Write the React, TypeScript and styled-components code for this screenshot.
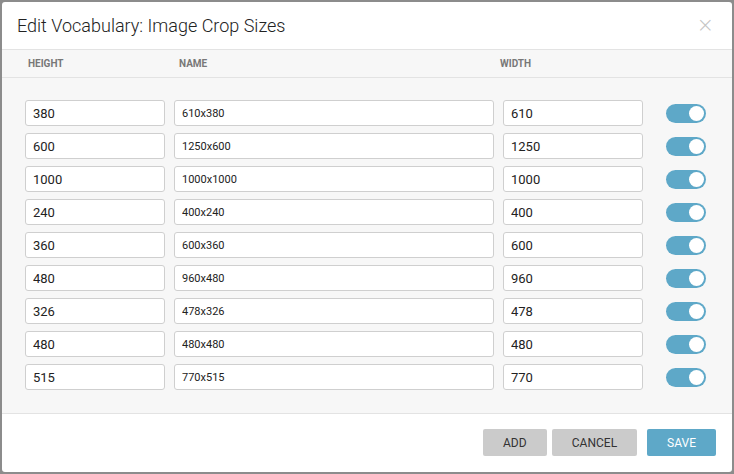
import React from "react";
import styled, { createGlobalStyle } from "styled-components";

const rows = [
  { height: "380", name: "610x380", width: "610" },
  { height: "600", name: "1250x600", width: "1250" },
  { height: "1000", name: "1000x1000", width: "1000" },
  { height: "240", name: "400x240", width: "400" },
  { height: "360", name: "600x360", width: "600" },
  { height: "480", name: "960x480", width: "960" },
  { height: "326", name: "478x326", width: "478" },
  { height: "480", name: "480x480", width: "480" },
  { height: "515", name: "770x515", width: "770" },
];

const App = () => {
  return (
    <>
      <GlobalStyle />
      <Backdrop>
        <Modal>
          <Header>
            <Title>Edit Vocabulary: Image Crop Sizes</Title>
            <Close>×</Close>
          </Header>
          <ColumnHeader>
            <Label>Height</Label>
            <Label>Name</Label>
            <Label>Width</Label>
          </ColumnHeader>
          <Body>
            {rows.map((r, i) => (
              <Row key={i}>
                <Field defaultValue={r.height} />
                <Field defaultValue={r.name} small />
                <Field defaultValue={r.width} />
                <Toggle>
                  <Knob />
                </Toggle>
              </Row>
            ))}
          </Body>
          <Footer>
            <Button>Add</Button>
            <Button>Cancel</Button>
            <Button primary>Save</Button>
          </Footer>
        </Modal>
      </Backdrop>
    </>
  );
};

export default App;

const GlobalStyle = createGlobalStyle`
  html, body {
    margin: 0;
    padding: 0;
    background: #8c8c8c;
    font-family: Roboto, "Liberation Sans", sans-serif;
  }
`;

const Backdrop = styled.div`
  width: 734px;
  height: 474px;
  padding: 2px;
  box-sizing: border-box;
  background: #8c8c8c;
`;

const Modal = styled.div`
  width: 730px;
  height: 470px;
  background: #fff;
  border-radius: 3px;
  overflow: hidden;
  display: flex;
  flex-direction: column;
`;

const Header = styled.div`
  height: 47px;
  display: flex;
  align-items: center;
  justify-content: space-between;
  padding: 0 18px 0 15px;
  border-bottom: 1px solid #e3e3e3;
  flex-shrink: 0;
`;

const Title = styled.div`
  font-size: 18px;
  font-weight: 300;
  color: #222;
  margin-top: 0;
`;

const Close = styled.div`
  font-size: 21px;
  color: #c4c4c4;
  font-family: "DejaVu Sans", sans-serif;
  font-weight: 300;
  margin-top: -2px;
`;

const ColumnHeader = styled.div`
  height: 27px;
  display: grid;
  grid-template-columns: 151px 321px 1fr;
  align-items: center;
  padding-left: 26px;
  background: #f7f7f7;
  border-bottom: 1px solid #e3e3e3;
  flex-shrink: 0;
`;

const Label = styled.div`
  font-size: 10px;
  font-weight: 700;
  color: #787878;
  text-transform: uppercase;
  margin-top: -1px;
`;

const Body = styled.div`
  background: #f7f7f7;
  padding: 22px 0 0 23px;
  height: 336px;
  box-sizing: border-box;
  border-bottom: 1px solid #e3e3e3;
  display: flex;
  flex-direction: column;
  gap: 7px;
  flex-shrink: 0;
`;

const Row = styled.div`
  display: grid;
  grid-template-columns: 140px 320px 140px 40px;
  column-gap: 9px;
  align-items: center;
`;

const Field = styled.input<{ small?: boolean }>`
  height: 26px;
  box-sizing: border-box;
  border: 1px solid #cfcfcf;
  border-radius: 3px;
  background: #fff;
  padding: 0 7px;
  font-family: Roboto, "Liberation Sans", sans-serif;
  font-size: ${(p) => (p.small ? "11px" : "13px")};
  color: #222;
  outline: none;
  width: 100%;
`;

const Toggle = styled.div`
  margin-left: 14px;
  width: 40px;
  height: 19px;
  border-radius: 10px;
  background: #5ea8c8;
  display: flex;
  align-items: center;
  justify-content: flex-end;
  padding-right: 2px;
  box-sizing: border-box;
`;

const Knob = styled.div`
  width: 15px;
  height: 15px;
  border-radius: 50%;
  background: #fff;
`;

const Footer = styled.div`
  flex: 1;
  display: flex;
  align-items: flex-start;
  justify-content: flex-end;
  padding: 15px 16px 0 0;
  gap: 5px;
`;

const Button = styled.button<{ primary?: boolean }>`
  height: 27px;
  border: none;
  border-radius: 2px;
  padding: 0 20px;
  min-width: 64px;
  margin-left: ${(p) => (p.primary ? "5px" : "0")};
  background: ${(p) => (p.primary ? "#5ea8c8" : "#cbcbcb")};
  color: ${(p) => (p.primary ? "#fff" : "#333")};
  font-family: Roboto, "Liberation Sans", sans-serif;
  font-size: 12px;
  text-transform: uppercase;
  cursor: pointer;
`;
